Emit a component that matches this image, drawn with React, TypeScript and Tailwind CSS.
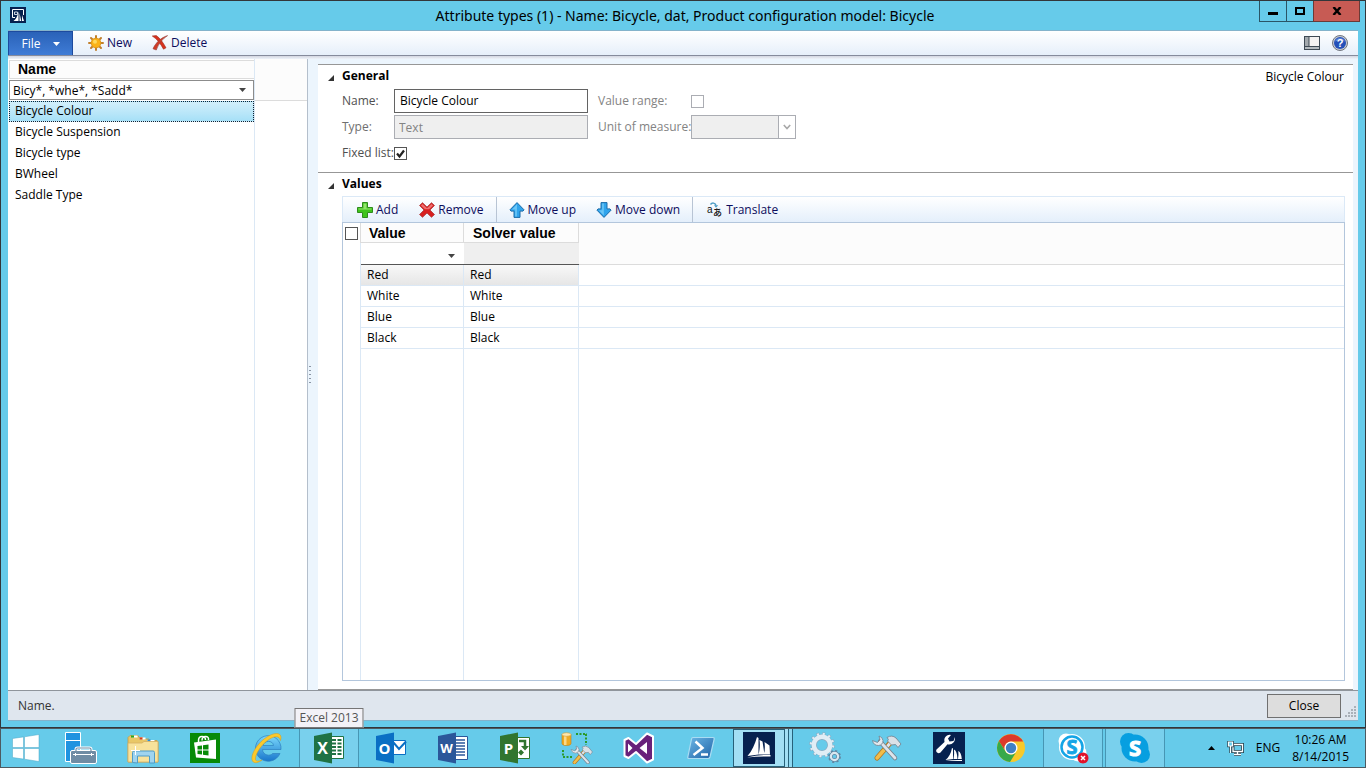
import type { ReactNode } from 'react';

const names = ['Bicycle Colour', 'Bicycle Suspension', 'Bicycle type', 'BWheel', 'Saddle Type'];
const values = ['Red', 'White', 'Blue', 'Black'];

/* ---------- toolbar icons ---------- */

function SunIcon() {
  return (
    <svg width="16" height="16" viewBox="0 0 16 16" aria-hidden="true">
      <g stroke="#c07f2c" strokeWidth="2" strokeLinecap="round">
        <path d="M8 1v14M1 8h14M3 3l10 10M13 3L3 13" />
      </g>
      <circle cx="8" cy="8" r="4.8" fill="#fbb216" stroke="#e09a1c" />
      <circle cx="7" cy="6.8" r="2" fill="#ffd95c" />
    </svg>
  );
}

function DeleteIcon() {
  return (
    <svg width="16" height="16" viewBox="0 0 16 16" aria-hidden="true">
      <path d="M.3 1l4-.4C8 3 11 7.500 14 12.800L11.500 14.200C8.500 8.500 5 4 .3 1z" fill="#d8321e" stroke="#9c2c1c" strokeWidth=".6" />
      <path d="M15.600.6C11 3.500 6.500 8.500 4.300 15L1 13.800C3.500 8 9 2.500 15.600.6z" fill="#cf3c28" stroke="#94403a" strokeWidth=".6" />
    </svg>
  );
}

function AddIcon() {
  return (
    <svg width="16" height="16" viewBox="0 0 16 16" aria-hidden="true">
      <path d="M5.500.5h5v5h5v5h-5v5h-5v-5h-5v-5h5z" fill="#3fc41c" stroke="#2e8b1c" />
      <path d="M6.500 1.500h3v5h5v1h-13v-1h5z" fill="#93e36d" />
    </svg>
  );
}

function RemoveIcon() {
  return (
    <svg width="16" height="16" viewBox="0 0 16 16" aria-hidden="true">
      <path d="M3.500.7L8 5l4.500-4.300 3 2.800L11 8l4.500 4.500-3 2.800L8 11l-4.500 4.300-3-2.800L5 8 .5 3.500z" fill="#d81f1f" stroke="#a83c3c" strokeWidth=".8" />
      <path d="M3.500 2L8 6.200 12.500 2l1.600 1.500-4 3.700H5.900l-4-3.700z" fill="#ee7070" />
    </svg>
  );
}

function ArrowUpIcon() {
  return (
    <svg width="16" height="16" viewBox="0 0 16 16" aria-hidden="true">
      <path d="M8 .6l7 7.2-1 1.300h-3v6.300H5V9.100H2L1 7.800z" fill="#2fa4ec" stroke="#1b6ba8" />
      <path d="M8 2.200L3 7.500h3.200v7h1.600z" fill="#6cc6f6" />
    </svg>
  );
}

function ArrowDownIcon() {
  return (
    <svg width="16" height="16" viewBox="0 0 16 16" aria-hidden="true">
      <path d="M8 15.400l7-7.200-1-1.300h-3V.6H5v6.300H2L1 8.200z" fill="#2fa4ec" stroke="#1b6ba8" />
      <path d="M6.200 1.600h1.600v12L3 8.200h3.200z" fill="#6cc6f6" />
    </svg>
  );
}

function TranslateIcon() {
  return (
    <svg width="16" height="16" viewBox="0 0 16 16" className="overflow-visible" aria-hidden="true">
      <path d="M3.500 2.500C5 .5 8 .5 9 3.500" fill="none" stroke="#4d9cc4" strokeWidth="1.500" />
      <path d="M7 3.200h4.200L9 5.800z" fill="#4d9cc4" />
      <text x="0" y="10.500" fontSize="10" fill="#111" fontFamily="Liberation Sans, sans-serif">a</text>
      <text x="6" y="14" fontSize="9" fontWeight="500" fill="#111" fontFamily="Noto Sans CJK JP, sans-serif">あ</text>
    </svg>
  );
}

function LayoutIcon() {
  return (
    <svg width="16" height="14" viewBox="0 0 16 14" aria-hidden="true">
      <path d="M0 0h16v14H0z" fill="#3f4a55" />
      <path d="M1 1h3.500v9H1z" fill="#a3a9ae" />
      <path d="M5.500 1H15v9H5.500z" fill="#f4f2f2" />
      <path d="M1 11h14v2H1z" fill="#b4babf" />
    </svg>
  );
}

function HelpIcon() {
  return (
    <svg width="16" height="16" viewBox="0 0 16 16" aria-hidden="true">
      <circle cx="8" cy="8" r="7.500" fill="#c9ccd4" stroke="#70757f" />
      <circle cx="8" cy="8" r="6" fill="#2450b8" />
      <path d="M3 6.500a5.300 5.300 0 0110 0c-3-1.500-7-1.500-10 0z" fill="#5f86da" />
      <text x="8" y="12" fontSize="11" fontWeight="700" textAnchor="middle" fill="#fff" fontFamily="Liberation Sans, sans-serif">?</text>
    </svg>
  );
}

function AppIcon() {
  return (
    <svg width="16" height="16" viewBox="0 0 16 16" aria-hidden="true">
      <path d="M0 0h16v16H0z" fill="#06214f" />
      <path d="M5 10.500H2.500v-8h11V8" fill="none" stroke="#fff" />
      <path d="M4.500 5h3v2.500h-3z" fill="none" stroke="#cfd8e6" />
      <path d="M3.500 14C6 12.500 7.500 9 8.500 4.500V14zM9.500 14V6l1.800 8zM12 14V8l2 6z" fill="#fff" />
    </svg>
  );
}

/* ---------- taskbar icons ---------- */

function Tile({ children }: { children: ReactNode }) {
  return (
    <svg width="32" height="32" viewBox="0 0 32 32" aria-hidden="true">
      {children}
    </svg>
  );
}

const letter = { fill: '#fff', fontWeight: 700, textAnchor: 'middle' as const, fontFamily: 'Open Sans, sans-serif' };

const StartIcon = (
  <Tile>
    <path d="M2.500 6.500l11-1.600v10.600h-11zM14.500 4.800L29 2.500v13H14.500zM2.500 16.500h11v10.600l-11-1.600zM14.500 16.500H29v13l-14.500-2.300z" fill="#fff" stroke="#4aa6c6" strokeWidth=".5" />
  </Tile>
);

const ServerIcon = (
  <Tile>
    <path d="M.5.5h15v29H.5z" fill="#1f93e0" stroke="#fff" />
    <path d="M1 8.500h14" stroke="#fff" />
    <path d="M11 19v-1.500q0-1.500 1.500-1.500h12q1.500 0 1.500 1.500V19" fill="none" stroke="#fff" strokeWidth="3" />
    <rect x="5.500" y="18.500" width="26" height="13" rx="1.500" fill="#6f8ca4" stroke="#fff" />
    <path d="M11 19v-1.500q0-1.500 1.500-1.500h12q1.500 0 1.500 1.500V19" fill="none" stroke="#6f8ca4" strokeWidth="1.200" />
    <path d="M8 22.500h21" stroke="#fff" />
    <path d="M10.500 21v3M26.500 21v3" stroke="#fff" />
  </Tile>
);

const ExplorerIcon = (
  <Tile>
    <path d="M1 5.500l2-2h8l1 2h4l1 1.500h5l1 1.500h7l1 1.500v20H1z" fill="#e9c766" stroke="#c59c46" strokeWidth=".8" />
    <path d="M4.500 4.500h6M12.500 6.500h6M20.500 9h7" stroke="#fff" strokeWidth="2" />
    <path d="M4 4.500h3" stroke="#2ea51e" strokeWidth="2.200" />
    <path d="M12.500 6.500h3" stroke="#d2401e" strokeWidth="2.200" />
    <path d="M20.500 8.500h3" stroke="#2a8fd8" strokeWidth="2.200" />
    <path d="M1 11h14l2-1.500h14V30H1z" fill="#f8e29b" stroke="#d6b062" strokeWidth=".8" />
    <path d="M5.500 30.500V20.500q0-1.500 1.500-1.500h19q1.500 0 1.500 1.500v10.500h-5V24H10.500v7z" fill="#9fd4ef" stroke="#4e9cc8" />
    <path d="M8.500 14v9M4 18.500h9" stroke="#fff" />
  </Tile>
);

const StoreIcon = (
  <Tile>
    <path d="M1 1h30v30H1z" fill="#078a07" />
    <path d="M9.500 10V8.500q0-4 3.500-4T16.500 8M13 8.500q0-4 3.500-4T19.500 8" fill="none" stroke="#fff" strokeWidth="1.500" />
    <path d="M5 10.500L27 7.500V27L7 25.500z" fill="#fff" />
    <path d="M8.500 14l4.500-.6v4.100H8.500zM14 13.300l5.500-.8v5H14zM8.500 18.500H13v4l-4.500-.5zM14 18.500h5.500v4.900l-5.500-.7z" fill="#078a07" />
  </Tile>
);

const IeIcon = (
  <Tile>
    <defs>
      <linearGradient id="ie" x1="0" y1="0" x2="0" y2="1">
        <stop offset="0" stopColor="#7ad8fc" />
        <stop offset="1" stopColor="#1977cc" />
      </linearGradient>
    </defs>
    <path d="M29 21.500A12.800 12.800 0 1130 17.500H11.500c.3 6 8 7 10 4zM12 13.500h10.500c-.5-5.500-9.500-5.500-10.500 0z" fill="url(#ie)" stroke="#2c7fc0" strokeWidth=".7" fillRule="evenodd" />
    <path d="M29.500 8.500C32 1 25.500-.5 17.500 4 7 10-1.500 23 1.500 29c1.500 3 6.500 1.500 9.500-1-3.500 1.500-6 1.500-6.500-.2C3.500 23.500 10 12 19 6.800c5-2.800 9.500-3.300 10.500 1.700z" fill="#fbc92c" stroke="#d79b16" strokeWidth=".5" />
  </Tile>
);

const ExcelIcon = (
  <Tile>
    <path d="M17 4.500h13.500v22H17z" fill="#fff" stroke="#1f7244" />
    <path d="M19 8h4M24.500 8h4M19 11.500h4M24.500 11.500h4M19 15h4M24.500 15h4M19 18.500h4M24.500 18.500h4M19 22h4M24.500 22h4" stroke="#1f7244" strokeWidth="2" />
    <path d="M1 4l18-3.500v31L1 28z" fill="#1f7244" />
    <text x="9.500" y="21.500" fontSize="16" {...letter}>X</text>
  </Tile>
);

const OutlookIcon = (
  <Tile>
    <path d="M17 8.500h13.500v14H17z" fill="#fff" stroke="#0a6fc4" />
    <path d="M18 10l6 7 7-7.500" fill="none" stroke="#0a6fc4" strokeWidth="2" />
    <path d="M1 4l18-3.500v31L1 28z" fill="#0a6fc4" />
    <text x="9.500" y="21.500" fontSize="15" {...letter}>O</text>
  </Tile>
);

const WordIcon = (
  <Tile>
    <path d="M17 4.500h13.500v23H17z" fill="#fff" stroke="#2b579a" />
    <path d="M19 8h9M19 11h9M19 14h9M19 17h9M19 20h9M19 23h9" stroke="#2b579a" strokeWidth="1.500" />
    <path d="M1 4l18-3.500v31L1 28z" fill="#2b579a" />
    <text x="9.500" y="20.500" fontSize="13" {...letter}>W</text>
  </Tile>
);

const ProjectIcon = (
  <Tile>
    <path d="M17 5.500h13.500v21H17z" fill="#fff" stroke="#31752f" />
    <path d="M20 9h6v8" fill="none" stroke="#31752f" strokeWidth="2.500" />
    <path d="M22 14h8l-4 4.500zM19 20.500l3-3 3 3-3 3z" fill="#31752f" />
    <path d="M1 4l18-3.500v31L1 28z" fill="#31752f" />
    <text x="9.500" y="21.500" fontSize="15" {...letter}>P</text>
  </Tile>
);

function CrossedTools() {
  return (
    <>
      <path d="M6 26L20 10" stroke="#b5741c" strokeWidth="5" strokeLinecap="round" />
      <path d="M6 26L13 18" stroke="#f0bd4a" strokeWidth="3.500" strokeLinecap="round" />
      <path d="M14 17l7-8" stroke="#dfe5ea" strokeWidth="3" />
      <path d="M16 5.500q5-3 9 .5l5 6-3 3.500-2.500-3-4 .5-4-4q2-1.500-.5-3.500z" fill="#dbe1e7" stroke="#6f7f8d" strokeWidth=".8" />
      <path d="M9 9.500L24 26" stroke="#74828e" strokeWidth="4.500" strokeLinecap="round" />
      <path d="M9 9.500L24 26" stroke="#dde4ea" strokeWidth="2.800" strokeLinecap="round" />
      <path d="M1.500 8.500q1 5 6 5 4.500-.5 4.500-5Q11.500 5 8 4l1 4-2.500 2.500z" fill="#e3e9ee" stroke="#74828e" strokeWidth=".8" />
    </>
  );
}

const DataToolsIcon = (
  <Tile>
    <path d="M1 2.500v9q0 2 4.500 2t4.500-2v-9z" fill="#efab22" stroke="#c07d14" strokeWidth=".6" />
    <path d="M3 3v10h2.500V3z" fill="#fbd987" />
    <ellipse cx="5.500" cy="2.500" rx="4.500" ry="1.800" fill="#fde7ae" stroke="#d29a33" strokeWidth=".6" />
    <path d="M15 2h11M25 2v11M2 18v7M2 25h10" fill="none" stroke="#2c9a2c" strokeWidth="2" strokeDasharray="2 1.500" />
    <g transform="translate(9 11) scale(.75)">
      <CrossedTools />
    </g>
  </Tile>
);

const VisualStudioIcon = (
  <Tile>
    <path d="M24 1.500l6 3v23l-6 3-11-10.500-7.500 6L1.500 24V8l4-2 7.500 6z" fill="#68217a" stroke="#fff" strokeWidth="2" strokeLinejoin="round" />
    <path d="M24 10v12l-7.500-6zM5 11.500l4.500 4.500L5 20.500z" fill="#fff" />
  </Tile>
);

const PowerShellIcon = (
  <Tile>
    <defs>
      <linearGradient id="ps" x1="0" y1="0" x2="1" y2="1">
        <stop offset="0" stopColor="#6cb7e6" />
        <stop offset="1" stopColor="#1f62a6" />
      </linearGradient>
    </defs>
    <path d="M8 5.500h20q1.500 0 1.200 1.500L25 25q-.4 1.500-2 1.500H4q-1.500 0-1.200-1.500L6.500 7q.3-1.500 1.500-1.500z" fill="url(#ps)" stroke="#a9dcf3" strokeWidth="1.200" />
    <path d="M10.500 9.500l7 6.500-9 7M16 22.500h7" fill="none" stroke="#fff" strokeWidth="2.500" />
  </Tile>
);

const DynamicsIcon = (
  <Tile>
    <path d="M0 0h32v32H0z" fill="#06214f" />
    <path d="M4.500 24C9 19 12 12 14 5l1.500 1V22.500zM15.500 22.500C17 17 17 12 16.500 8l3 1.500 2 13zM21 22.500c1-4.500 1-8.500.5-12.500l5 3.500.5 9z" fill="#fff" />
    <path d="M4 25.500q12-3 23.500-2.500v1.500q-12-.2-23.500 1z" fill="#fff" />
  </Tile>
);

const GearsIcon = (
  <Tile>
    <circle cx="13" cy="13" r="11" fill="none" stroke="#86a9c0" strokeWidth="3.500" strokeDasharray="2.900 2.860" />
    <circle cx="13" cy="13" r="8" fill="none" stroke="#86a9c0" strokeWidth="5.500" />
    <circle cx="13" cy="13" r="11" fill="none" stroke="#e0edf5" strokeWidth="2.500" strokeDasharray="2 3.760" strokeDashoffset="-.45" />
    <circle cx="13" cy="13" r="8.200" fill="none" stroke="#e0edf5" strokeWidth="4.500" />
    <circle cx="25.500" cy="24.500" r="5.200" fill="none" stroke="#5f87a3" strokeWidth="2.500" strokeDasharray="2 2.080" />
    <circle cx="25.500" cy="24.500" r="3.600" fill="none" stroke="#5f87a3" strokeWidth="3.600" />
    <circle cx="25.500" cy="24.500" r="3.600" fill="none" stroke="#dbe8f0" strokeWidth="2.200" />
  </Tile>
);

const ToolsIcon = (
  <Tile>
    <CrossedTools />
  </Tile>
);

const DynamicsToolsIcon = (
  <Tile>
    <path d="M0 0h32v32H0z" fill="#06214f" />
    <path d="M3.500 17.500l8-7.500q-1-4.500 2.500-6.500 2-1 4-.5l-3 3.500 1.500 3 4-.5L22 5q.5 5-3.500 7-2 .8-4 .3l-7 8.200q-2.500 1.500-4-.5-.8-1.500 0-2.500z" fill="#fff" />
    <path d="M12.500 28q5-4 6.500-12l1 .5V27zM20.500 27q1-5 .5-9.500 3 1 3.500 9.500zM25 27q.8-4 .3-8 3 1.500 3.500 8zM12.500 29q8-1.500 16.500-1v1z" fill="#fff" />
  </Tile>
);

const ChromeIcon = (
  <Tile>
    <circle cx="16" cy="16" r="14" fill="#f7c92a" />
    <path d="M3.900 9A14 14 0 0128.100 9.500L16 9.600a6.500 6.500 0 00-5.700 9.500z" fill="#dd3b2b" />
    <path d="M3.900 9A14 14 0 0015 30l6.500-10.500a6.500 6.500 0 01-11.300-.4z" fill="#37a94a" />
    <circle cx="16" cy="16" r="6.500" fill="#fff" />
    <circle cx="16" cy="16" r="5.200" fill="#3f80c4" />
  </Tile>
);

const SkypeBusinessIcon = (
  <Tile>
    <circle cx="9" cy="9" r="7.500" fill="#fff" />
    <circle cx="21" cy="21" r="8.500" fill="#fff" />
    <circle cx="15" cy="15" r="13" fill="#fff" />
    <circle cx="15" cy="15" r="10.500" fill="none" stroke="#14a5e6" strokeWidth="2.500" />
    <text x="15" y="22" fontSize="20" stroke="#14a5e6" strokeWidth=".8" {...letter} fill="#14a5e6">S</text>
    <circle cx="26" cy="26" r="5.500" fill="#e2122a" />
    <path d="M24 24l4 4M28 24l-4 4" stroke="#fff" strokeWidth="1.500" />
  </Tile>
);

const SkypeIcon = (
  <Tile>
    <circle cx="9.500" cy="9.500" r="8.500" fill="#079fe0" />
    <circle cx="22.500" cy="22.500" r="8.500" fill="#079fe0" />
    <circle cx="16" cy="16" r="13.500" fill="#079fe0" />
    <text x="16" y="24" fontSize="22" stroke="#fff" strokeWidth="1" {...letter}>S</text>
  </Tile>
);

interface TaskItem {
  label: string;
  icon: ReactNode;
  open?: boolean;
}

const taskbar: TaskItem[] = [
  { label: 'Server Manager', icon: ServerIcon },
  { label: 'File Explorer', icon: ExplorerIcon },
  { label: 'Store', icon: StoreIcon },
  { label: 'Internet Explorer', icon: IeIcon },
  { label: 'Excel 2013', icon: ExcelIcon, open: true },
  { label: 'Outlook 2013', icon: OutlookIcon },
  { label: 'Word 2013', icon: WordIcon },
  { label: 'Project 2013', icon: ProjectIcon },
  { label: 'Data Tools', icon: DataToolsIcon },
  { label: 'Visual Studio', icon: VisualStudioIcon },
  { label: 'PowerShell', icon: PowerShellIcon },
];

const taskbarRight: TaskItem[] = [
  { label: 'Services', icon: GearsIcon },
  { label: 'Tools', icon: ToolsIcon },
  { label: 'Dynamics Tools', icon: DynamicsToolsIcon },
  { label: 'Chrome', icon: ChromeIcon },
  { label: 'Skype for Business', icon: SkypeBusinessIcon, open: true },
  { label: 'Skype', icon: SkypeIcon, open: true },
];

function TaskButton({ label, icon, open = false }: TaskItem) {
  return (
    <button
      type="button"
      aria-label={label}
      className={
        open
          ? 'flex w-15 items-center justify-center border-x border-[#4796b4] bg-[#79d0ed]'
          : 'flex w-15 items-center justify-center'
      }
    >
      {icon}
    </button>
  );
}

/* ---------- small controls ---------- */

function ToolButton({ icon, children }: { icon: ReactNode; children: ReactNode }) {
  return (
    <button type="button" className="flex items-center gap-[3px] whitespace-nowrap text-[#0c0c5c]">
      {icon}
      {children}
    </button>
  );
}

function Caret() {
  return (
    <svg width="7" height="4" viewBox="0 0 7 4" aria-hidden="true">
      <path d="M0 0h7L3.500 4z" fill="currentColor" />
    </svg>
  );
}

function SectionTitle({ children }: { children: ReactNode }) {
  return (
    <h2 className="flex h-5 items-center gap-2 pt-px text-[12px] font-bold text-black">
      <svg width="6" height="6" viewBox="0 0 6 6" className="mt-1" aria-hidden="true">
        <path d="M6 0v6H0z" fill="#333" />
      </svg>
      {children}
    </h2>
  );
}

function MenuBar() {
  return (
    <div className="flex h-6 items-center bg-linear-to-b from-white to-[#e6effa] pr-[10px]">
      <button
        type="button"
        className="flex w-[65px] items-center justify-center gap-3 self-stretch border border-b-0 border-[#1d4a9e] bg-linear-to-b from-[#2a62b8] to-[#3f7cd6] text-white"
      >
        File
        <Caret />
      </button>
      <div className="flex flex-1 gap-5 pl-[15px]">
        <ToolButton icon={<SunIcon />}>New</ToolButton>
        <ToolButton icon={<DeleteIcon />}>Delete</ToolButton>
      </div>
      <div className="flex items-center gap-3">
        <button type="button" aria-label="Layout"><LayoutIcon /></button>
        <button type="button" aria-label="Help"><HelpIcon /></button>
      </div>
    </div>
  );
}

function NameList() {
  return (
    <aside className="flex w-[300px] shrink-0 flex-col border-r border-[#b4bfcc] bg-white">
      <div className="flex flex-1">
        <div className="flex w-[247px] flex-col border-r border-[#dbe8f5]">
          <table className="w-full border-separate border-spacing-0 text-left">
            <thead>
              <tr>
                <th className="p-0 pt-px pl-px">
                  <div className="h-[19px] border border-r-0 border-[#dcdcdc] bg-[#fcfcfc] pl-2 font-[Liberation_Sans,Arial,sans-serif] text-[14px] leading-4 font-bold">
                    Name
                  </div>
                </th>
              </tr>
              <tr>
                <td className="h-[22px] p-0 pl-px">
                  <div className="flex h-5 items-center border border-[#8c8c8c] bg-white pr-[7px] text-[#444]">
                    <input aria-label="Filter by name" defaultValue="Bicy*, *whe*, *Sadd*" className="min-w-0 flex-1 pt-px pl-[3px] leading-4 text-black outline-none" />
                    <button type="button" aria-label="Filter options"><Caret /></button>
                  </div>
                </td>
              </tr>
            </thead>
            <tbody>
              {names.map((name, i) => (
                <tr key={name}>
                  <td className="h-[21px] p-0 pl-px">
                    <div
                      className={
                        i === 0
                          ? 'h-[21px] border border-dotted border-[#123] bg-linear-to-b from-[#d2effb] to-[#a6e0f7] pl-[5px] leading-[18px]'
                          : 'h-[21px] pl-[6px] leading-5'
                      }
                    >
                      {name}
                    </div>
                  </td>
                </tr>
              ))}
            </tbody>
          </table>
        </div>
        <div className="h-[42px] flex-1 border-b border-[#dcdcdc] bg-[#fcfcfc]" />
      </div>
    </aside>
  );
}

function GeneralSection() {
  return (
    <section className="border-b border-[#979797] pb-[7px] pl-[10px]">
      <div className="flex items-center justify-between pr-[9px]">
        <SectionTitle>General</SectionTitle>
        <span className="pt-1">Bicycle Colour</span>
      </div>
      <form className="flex gap-[10px] pt-1 pl-[14px] whitespace-nowrap text-[#4f4f4f]">
        <div className="grid auto-rows-[24px] grid-cols-[52px_194px] items-center gap-y-[2px]">
          <label htmlFor="name">Name:</label>
          <input id="name" defaultValue="Bicycle Colour" className="h-6 border border-[#636363] bg-white px-[5px] pb-[2px] text-black outline-none" />
          <label htmlFor="type" className="text-[#6f6f6f]">Type:</label>
          <input id="type" disabled defaultValue="Text" className="h-6 border border-[#abadb3] bg-[#efefef] px-1 text-[#838383]" />
          <label htmlFor="fixed">Fixed list:</label>
          <span className="relative flex h-[13px] w-[13px]">
            <input id="fixed" type="checkbox" defaultChecked className="h-[13px] w-[13px] appearance-none border border-[#555] bg-white" />
            <svg width="13" height="13" viewBox="0 0 13 13" className="pointer-events-none absolute inset-0" aria-hidden="true">
              <path d="M3 6.500l2.500 3L10 3.500" fill="none" stroke="#222" strokeWidth="2.200" />
            </svg>
          </span>
        </div>
        <div className="grid auto-rows-[24px] grid-cols-[93px_105px] items-center gap-y-[2px] text-[#838383]">
          <label htmlFor="range">Value range:</label>
          <input id="range" type="checkbox" disabled className="h-[13px] w-[13px] appearance-none border border-[#abadb3] bg-white" />
          <label htmlFor="unit">Unit of measure:</label>
          <span className="relative flex">
            <select id="unit" disabled className="h-6 w-full appearance-none border border-[#abadb3] bg-[#efefef]" />
            <span className="pointer-events-none absolute inset-y-px right-px flex w-[17px] items-center justify-center border-l border-[#abadb3] bg-white">
              <svg width="8" height="6" viewBox="0 0 8 6" aria-hidden="true">
                <path d="M.8 1L4 4.600 7.200 1" fill="none" stroke="#a8a8a8" strokeWidth="1.600" />
              </svg>
            </span>
          </span>
        </div>
      </form>
    </section>
  );
}

function ValuesSection() {
  return (
    <section className="flex flex-1 flex-col border-b border-[#979797] pr-2 pb-2 pl-[10px]">
      <SectionTitle>Values</SectionTitle>
      <div className="mt-[3px] ml-[14px] flex flex-1 flex-col">
        <div className="flex h-[26px] items-center border border-b-0 border-[#dbe9f7] bg-linear-to-b from-white to-[#e4effb] pl-[14px]">
          <div className="flex gap-[21px] pr-3">
            <ToolButton icon={<AddIcon />}>Add</ToolButton>
            <ToolButton icon={<RemoveIcon />}>Remove</ToolButton>
          </div>
          <div className="flex gap-5 self-stretch border-l border-[#b8c4d4] px-3">
            <ToolButton icon={<ArrowUpIcon />}>Move up</ToolButton>
            <ToolButton icon={<ArrowDownIcon />}>Move down</ToolButton>
          </div>
          <div className="flex self-stretch border-l border-[#b8c4d4] px-[14px]">
            <ToolButton icon={<TranslateIcon />}>Translate</ToolButton>
          </div>
        </div>
        <div className="flex flex-1 flex-col border border-[#b3c6dc]">
          <table className="w-full table-fixed border-separate border-spacing-0 text-left">
            <colgroup>
              <col className="w-[18px]" />
              <col className="w-[103px]" />
              <col className="w-[115px]" />
              <col />
            </colgroup>
            <thead className="bg-[#fcfcfc]">
              <tr className="h-5 font-[Liberation_Sans,Arial,sans-serif] text-[14px] leading-4">
                <th className="border-r border-[#dcdcdc] bg-white p-0 pl-[2px]">
                  <input type="checkbox" aria-label="Select all" className="block h-[13px] w-[13px] appearance-none border border-[#555] bg-white" />
                </th>
                <th className="border-r border-b border-[#dcdcdc] p-0 pl-2 font-bold">Value</th>
                <th className="border-r border-b border-[#dcdcdc] p-0 pl-[9px] font-bold">Solver value</th>
                <td className="p-0" />
              </tr>
              <tr className="h-[22px]">
                <td className="border-r border-[#dbe8f5] bg-white p-0" />
                <td className="border-b border-[#555] bg-white p-0">
                  <div className="flex items-center pt-1 pr-[9px] text-[#444]">
                    <input aria-label="Filter by value" className="h-4 min-w-0 flex-1 outline-none" />
                    <button type="button" aria-label="Value filter options"><Caret /></button>
                  </div>
                </td>
                <td className="border-b border-[#555] bg-[#efefef] p-0" />
                <td className="border-b border-[#dcdcdc] p-0" />
              </tr>
            </thead>
            <tbody>
              {values.map((value, i) => (
                <tr key={value} className={i === 0 ? 'h-[21px] bg-linear-to-b from-[#f8f8f8] to-[#e5e5e5]' : 'h-[21px]'}>
                  <td className="border-r border-[#dbe8f5] bg-white p-0" />
                  <td className="border-r border-b border-[#dbe8f5] p-0 pl-[6px]">{value}</td>
                  <td className="border-r border-b border-[#dbe8f5] p-0 pl-[6px]">{value}</td>
                  <td className="border-b border-[#dbe8f5] bg-white p-0" />
                </tr>
              ))}
            </tbody>
          </table>
          <div className="flex flex-1">
            <div className="w-[18px] border-r border-[#dbe8f5]" />
            <div className="w-[103px] border-r border-[#dbe8f5]" />
            <div className="w-[115px] border-r border-[#dbe8f5]" />
          </div>
        </div>
      </div>
    </section>
  );
}

export default function App() {
  return (
    <div className="flex min-h-screen flex-col bg-[#66cbea] font-[Open_Sans,Noto_Sans,sans-serif] text-[12px] leading-4 text-black">
      <div className="flex flex-1 flex-col border border-[#33363a] pb-[6px]">
        {/* Title bar */}
        <header className="grid h-[29px] grid-cols-[107px_1fr_107px] pr-[5px] pl-[9px]">
          <div className="pt-[6px]"><AppIcon /></div>
          <h1 className="self-center text-center font-[Noto_Sans,Open_Sans,sans-serif] text-[14px] leading-5">
            Attribute types (1) - Name: Bicycle, dat, Product configuration model: Bicycle
          </h1>
          <div className="flex h-[21px] justify-end">
            <button type="button" aria-label="Minimize" className="flex w-7 items-center justify-center border border-t-0 border-[#2a5566]">
              <svg width="10" height="10" viewBox="0 0 10 10"><path d="M0 6h10v3H0z" /></svg>
            </button>
            <button type="button" aria-label="Maximize" className="flex w-[26px] items-center justify-center border-b border-[#2a5566]">
              <svg width="10" height="8" viewBox="0 0 10 8"><path d="M1 1h8v6H1z" fill="none" stroke="#000" strokeWidth="2" /></svg>
            </button>
            <button type="button" aria-label="Close window" className="flex w-[47px] items-center justify-center border border-t-0 border-[#6b3a36] bg-[#c75b54]">
              <svg width="10" height="8" viewBox="0 0 10 8"><path d="M1.500 0l7 8M8.500 0l-7 8" stroke="#000" strokeWidth="2.400" /></svg>
            </button>
          </div>
        </header>

        <div className="mx-[7px] flex flex-1 flex-col border-y border-[#84b3cb] bg-white">
          <MenuBar />
          <div className="h-1 border-t border-[#858b9c] bg-linear-to-b from-[#d3d6e0] to-[#eef3fa]" />
          <main className="flex flex-1 bg-[#ecf5fd]">
            <NameList />
            <div className="flex w-[10px] flex-col items-center justify-center gap-[3px] pr-[7px]">
              {[0, 1, 2, 3, 4].map((dot) => (
                <span key={dot} className="h-px w-[2px] bg-[#8a95a5]" />
              ))}
            </div>
            <div className="mt-[5px] mr-[5px] flex flex-1 flex-col border-t border-[#979797] bg-white">
              <GeneralSection />
              <ValuesSection />
            </div>
          </main>
          <footer className="flex h-[30px] items-center justify-between border-t border-[#8f959c] bg-[#dfe6ee] pr-px pl-[10px] text-[#333]">
            <span>Name.</span>
            <div className="flex items-center gap-1">
              <button type="button" className="h-6 w-[74px] border border-[#707070] bg-[#dddddd] text-black">Close</button>
              <svg width="12" height="12" viewBox="0 0 12 12" className="mt-3" aria-hidden="true">
                <path d="M9 0h2v2H9zM6 3h2v2H6zM9 3h2v2H9zM3 6h2v2H3zM6 6h2v2H6zM9 6h2v2H9zM0 9h2v2H0zM3 9h2v2H3zM6 9h2v2H6zM9 9h2v2H9z" fill="#a9b0b8" />
              </svg>
            </div>
          </footer>
        </div>
      </div>

      {/* Taskbar */}
      <nav className="flex h-10 border border-[#4d5a61]">
        <button type="button" aria-label="Start" className="flex w-[50px] items-center justify-center">{StartIcon}</button>
        <div className="flex gap-[2px]">
          {taskbar.map((item) => (
            <div key={item.label} className="relative flex">
              <TaskButton {...item} />
              {item.label === 'Excel 2013' && (
                <span role="tooltip" className="absolute bottom-full left-1/2 mb-px -translate-x-1/2 border border-[#767676] bg-[#f3f2f7] px-1 py-px whitespace-nowrap text-[#555]">
                  {item.label}
                </span>
              )}
            </div>
          ))}
          <div className="flex w-15">
            <button type="button" aria-label="Dynamics AX" className="flex w-[52px] items-center justify-center border border-[#27617a] bg-[#a3dff4]">
              {DynamicsIcon}
            </button>
            <span className="w-1 border-r border-[#27617a] bg-[#a3dff4]" />
            <span className="w-1 border-r border-[#27617a] bg-[#8fd8f1]" />
          </div>
          {taskbarRight.map((item) => (
            <TaskButton key={item.label} {...item} />
          ))}
        </div>
        <div className="ml-auto flex items-center gap-3 pr-4">
          <button type="button" aria-label="Show hidden icons" className="rotate-180"><Caret /></button>
          <button type="button" aria-label="Network">
            <svg width="17" height="15" viewBox="0 0 17 15" aria-hidden="true">
              <path d="M6 3.500h9.500v7H6zM10.500 11v2M7 13.500h7" fill="none" stroke="#23424f" strokeWidth="3" />
              <path d="M6 3.500h9.500v7H6zM10.500 11v2M7 13.500h7" fill="none" stroke="#fff" strokeWidth="1.300" />
              <path d="M1.500 1h4v4h-4zM3.500 5v7" fill="#66cbea" stroke="#23424f" strokeWidth="2.600" />
              <path d="M1.500 1h4v4h-4zM3.500 5v7" fill="#66cbea" stroke="#fff" strokeWidth="1.200" />
            </svg>
          </button>
          <span>ENG</span>
          <div className="text-center leading-[17px]">
            <div>10:26 AM</div>
            <div>8/14/2015</div>
          </div>
        </div>
      </nav>
    </div>
  );
}
